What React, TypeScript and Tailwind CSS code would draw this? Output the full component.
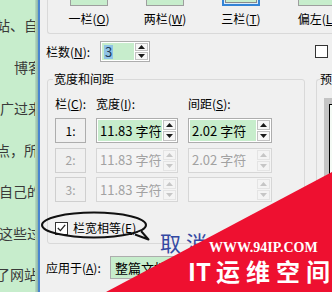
import React from "react"

const docLines = [
  { text: "站、自", ml: "-ml-[4px]" },
  { text: "博客", ml: "ml-[14px]" },
  { text: "广过来", ml: "ml-[0px]" },
  { text: "点，所", ml: "-ml-[4px]" },
  { text: "自己的", ml: "-ml-[1px]" },
  { text: "这些过", ml: "-ml-[1px]" },
  { text: "了网站", ml: "-ml-[4px]" },
]

const presets = [
  { name: "一栏", key: "O" },
  { name: "两栏", key: "W" },
  { name: "三栏", key: "T", selected: true },
  { name: "偏左", key: "L" },
]

function Arrows({ disabled }: { disabled?: boolean }) {
  const c = disabled ? "#c6c6c6" : "#1a1a1a"
  const box = disabled ? "border-[#e4e4e4] bg-[#f4f4f4]" : "border-[#c2c2c2] bg-[#f7f7f7]"
  return (
    <div className="flex w-[13px] flex-col gap-[1px]">
      <div className={`flex flex-1 items-center justify-center border ${box}`}>
        <svg width="7" height="4" viewBox="0 0 7 4">
          <path d="M0 4 L3.5 0 L7 4Z" fill={c} />
        </svg>
      </div>
      <div className={`flex flex-1 items-center justify-center border ${box}`}>
        <svg width="7" height="4" viewBox="0 0 7 4">
          <path d="M0 0 L3.5 4 L7 0Z" fill={c} />
        </svg>
      </div>
    </div>
  )
}

function SpinBox({ value, disabled, w }: { value: string; disabled?: boolean; w: string }) {
  return (
    <div
      className={`flex h-[25px] ${w} border p-[1px] ${
        disabled ? "border-[#d6d6d6] bg-[#f4f4f4]" : "border-[#adadad] bg-white"
      }`}
    >
      <div
        className={`mr-[1px] flex flex-1 items-center pl-[2px] text-[13px] ${
          disabled ? "text-[#a2a2a2]" : "bg-[#c7edcc] text-black"
        }`}
      >
        {value}
      </div>
      <Arrows disabled={disabled} />
    </div>
  )
}

function ColButton({ label, disabled }: { label: string; disabled?: boolean }) {
  return (
    <div
      className={`flex h-[25px] items-center justify-center border bg-[#f0f0f0] text-[12px] ${
        disabled ? "border-[#cfcfcf] text-[#a2a2a2]" : "border-[#adadad] text-black"
      }`}
    >
      {label}
    </div>
  )
}

export default function App() {
  return (
    <div className="relative flex h-[292px] w-[332px] overflow-hidden bg-[#f0f0f0] font-['Noto_Sans_CJK_SC',sans-serif] text-[12px] text-black">
      {/* document behind the dialog */}
      <div className="flex w-[35px] shrink-0 flex-col overflow-hidden bg-[#c7edcc] pt-[5px] text-[14px] leading-[41.5px] text-[#3a3a3a]">
        {docLines.map((l) => (
          <div key={l.text} className={`whitespace-nowrap ${l.ml}`}>
            {l.text}
          </div>
        ))}
      </div>
      <div className="w-[3px] shrink-0 bg-gradient-to-r from-[#b9dcc0] to-[#8cb4a8]" />
      <div className="w-[2px] shrink-0 bg-[#4a86cf]" />

      {/* dialog */}
      <div className="flex w-[292px] shrink-0 flex-col overflow-hidden">
        {/* presets */}
        <div className="ml-[7px] flex h-[34px] rounded-bl-[3px] border-b border-l border-[#d9d9d9] pl-[3px]">
          {presets.map((p) => (
            <div key={p.key} className="flex w-[76px] shrink-0 flex-col items-center">
              {p.selected ? (
                <div className="h-[6px] w-[38px] border-x-2 border-b-2 border-[#3384d6] bg-[#dcecf8] px-[1px] pb-[1px]">
                  <div className="h-full border-x border-b border-[#8a8a8a] bg-[#c7edcc]" />
                </div>
              ) : (
                <div className="h-[6px] w-[38px] border-x border-b border-[#9e9e9e] bg-[#c7edcc]" />
              )}
              <div className="mt-[5px] whitespace-nowrap leading-[16px]">
                {p.name}(<u>{p.key}</u>)
              </div>
            </div>
          ))}
        </div>

        {/* number of columns */}
        <div className="mt-[7px] flex h-[21px] items-center">
          <div className="ml-[6px] w-[54px] whitespace-nowrap">
            栏数(<u>N</u>):
          </div>
          <div className="flex h-[21px] w-[50px] border border-[#adadad] bg-white p-[1px]">
            <div className="mr-[1px] flex flex-1 items-center bg-[#c7edcc] pl-[2px] text-[13px]">
              <span className="bg-[#8fc3e6] px-[1px] leading-[14px] text-[#1d3b58]">3</span>
            </div>
            <Arrows />
          </div>
          <div className="ml-auto mr-[4px] h-[13px] w-[13px] border border-[#333] bg-white" />
        </div>

        {/* width and spacing + preview */}
        <div className="mt-[17px] flex">
          <div className="ml-[7px] flex h-[165px] w-[258px] shrink-0 flex-col rounded-[3px] border border-[#d9d9d9] pl-[7px]">
            <span className="-mt-[9px] -ml-[2px] w-fit bg-[#f0f0f0] px-[1px] leading-[16px]">宽度和间距</span>
            <div className="mt-[9px] grid grid-cols-[31px_82px_84px] gap-x-[10px] leading-[16px]">
              <div className="whitespace-nowrap">
                栏(<u>C</u>):
              </div>
              <div className="whitespace-nowrap">
                宽度(<u>I</u>):
              </div>
              <div className="whitespace-nowrap">
                间距(<u>S</u>):
              </div>
            </div>
            <div className="mt-[6px] grid grid-cols-[31px_82px_84px] gap-x-[10px] gap-y-[4.5px]">
              <ColButton label="1:" />
              <SpinBox value="11.83 字符" w="w-[82px]" />
              <SpinBox value="2.02 字符" w="w-[84px]" />
              <ColButton label="2:" disabled />
              <SpinBox value="11.83 字符" w="w-[82px]" disabled />
              <SpinBox value="2.02 字符" w="w-[84px]" disabled />
              <ColButton label="3:" disabled />
              <SpinBox value="11.83 字符" w="w-[82px]" disabled />
              <SpinBox value="" w="w-[84px]" disabled />
            </div>
            <div className="mt-[18px] flex h-[16px] items-center gap-[5px]">
              <div className="flex h-[13px] w-[13px] items-center justify-center border border-[#333] bg-white">
                <svg width="9" height="8" viewBox="0 0 9 8">
                  <path d="M0.8 4 L3.4 6.6 L8.2 0.8" fill="none" stroke="#222" strokeWidth="1.3" />
                </svg>
              </div>
              <span className="whitespace-nowrap">
                栏宽相等(<u>E</u>)
              </span>
            </div>
          </div>

          <div className="ml-[11px] flex h-[165px] flex-1 flex-col rounded-tl-[3px] border-l border-t border-[#d9d9d9]">
            <span className="-mt-[9px] ml-[3px] w-fit bg-[#f0f0f0] leading-[16px]">预</span>
            <div className="ml-[7px] mt-[11px] flex-1 bg-[#c4c4c4] pl-[5px] pt-[6px]">
              <div className="h-full border-l border-t border-black bg-[#f4faf5]" />
            </div>
          </div>
        </div>

        {/* apply to */}
        <div className="mt-[12px] flex h-[23px] items-center">
          <div className="ml-[6px] w-[64px] whitespace-nowrap">
            应用于(<u>A</u>):
          </div>
          <div className="flex h-[23px] w-[150px] items-center border border-[#adadad] bg-[#c7edcc] pl-[4px] text-[13px]">
            整篇文档
          </div>
        </div>
      </div>

      {/* annotation text partly under the watermark */}
      <div className="absolute left-[160px] top-[228px] whitespace-nowrap text-[21px] leading-[28px] tracking-[5px] text-[#3449a3]">
        取消
      </div>

      {/* overlay drawings: callout bubble and watermark */}
      <svg className="pointer-events-none absolute inset-0" width="332" height="292" viewBox="0 0 332 292">
        <ellipse cx="94" cy="225" rx="52" ry="12.5" fill="none" stroke="#111" strokeWidth="2" />
        <path d="M135 234.5 L148.5 239.5 L141 231" fill="#f0f0f0" stroke="#111" strokeWidth="2" strokeLinejoin="round" />
        <polygon points="332,172 332,292 106,292" fill="#ee1030" />
      </svg>

      <div className="absolute left-[209px] top-[241px] whitespace-nowrap font-['Liberation_Serif',serif] text-[14px] font-bold leading-[14px] text-white">
        WWW.94IP.COM
      </div>
      <div className="absolute left-[188px] top-[259px] whitespace-nowrap text-[24px] font-bold leading-[24px] text-white">
        <span>IT</span>
        <span className="ml-[5px] tracking-[6px]">运维空间</span>
      </div>
    </div>
  )
}
